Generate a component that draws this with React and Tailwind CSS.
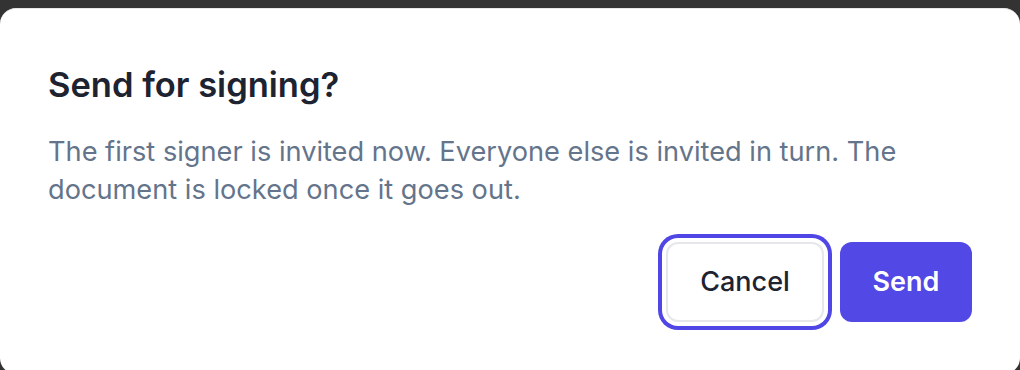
export default function App() {
  return (
    <div className="w-[1020px] h-[370px] overflow-hidden bg-[#333333] pt-[8px] font-['Inter',sans-serif]">
      <div className="flex h-[366px] flex-col rounded-2xl border-t border-[#e6e6e6] bg-white px-12 pt-[56px]">
        <h2 className="text-[34.5px] font-semibold leading-[40px] text-[#1d2330]">
          Send for signing?
        </h2>
        <p className="mt-[28px] text-[27.2px] leading-[38px] text-[#64748b]">
          The first signer is invited now. Everyone else is invited in turn. The
          <br />
          document is locked once it goes out.
        </p>
        <div className="mt-[33px] flex justify-end gap-4">
          <button className="h-[80px] w-[158px] rounded-xl border-2 border-[#e5e7eb] bg-white text-[27px] font-medium text-[#1d2330] ring-4 ring-[#4f46e5] ring-offset-4">
            Cancel
          </button>
          <button className="h-[80px] w-[132px] rounded-xl bg-[#5148e5] text-[27px] font-semibold text-white">
            Send
          </button>
        </div>
      </div>
    </div>
  );
}
